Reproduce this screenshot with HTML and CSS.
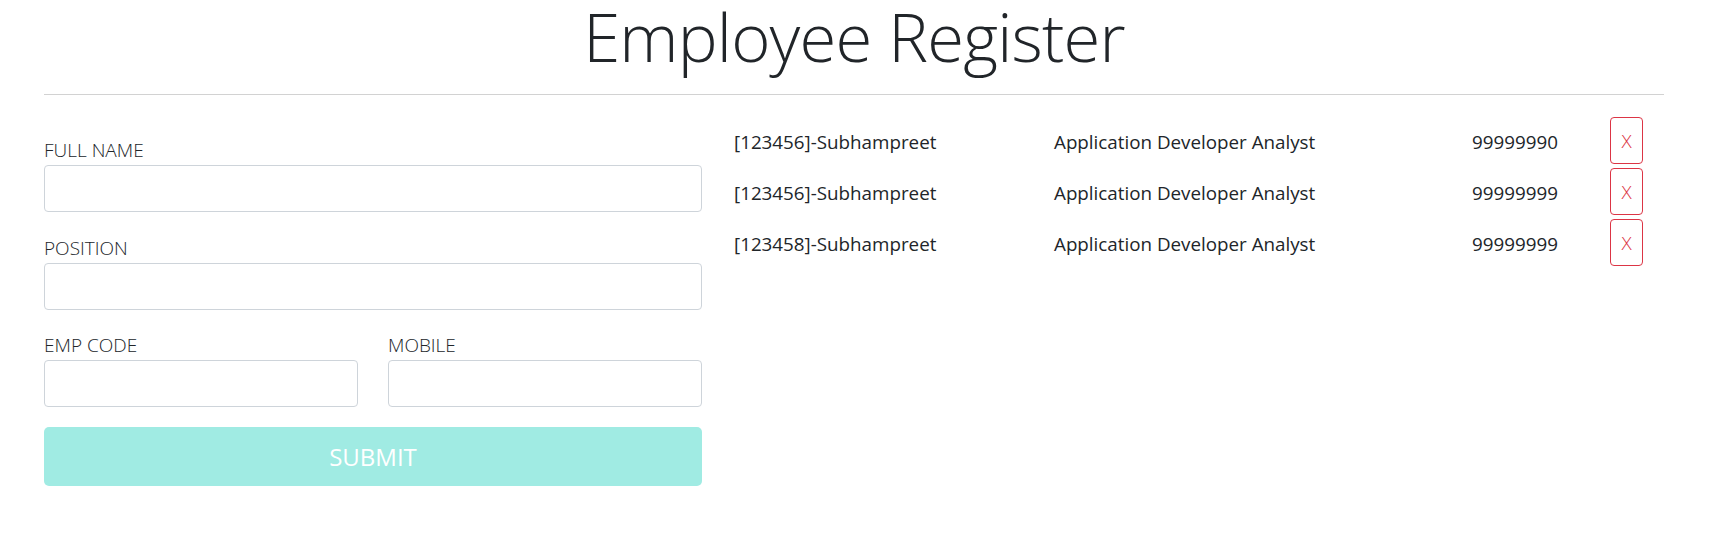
FILE: index.html
```html
<!DOCTYPE html>
<html lang="en">
<head>
<meta charset="utf-8">
<title>Employee Register</title>
<link rel="stylesheet" href="styles.css">
</head>
<body>
<div class="page">
  <h1 class="title">Employee Register</h1>
  <div class="rule"></div>
  <div class="main">
    <form class="form">
      <div class="group">
        <label class="label">FULL NAME</label>
        <input class="input" type="text">
      </div>
      <div class="group">
        <label class="label">POSITION</label>
        <input class="input" type="text">
      </div>
      <div class="group pair">
        <div class="half">
          <label class="label">EMP CODE</label>
          <input class="input" type="text">
        </div>
        <div class="half">
          <label class="label">MOBILE</label>
          <input class="input" type="text">
        </div>
      </div>
      <button class="submit" type="button">SUBMIT</button>
    </form>
    <div class="list">
      <div class="row">
        <span class="cell">[123456]-Subhampreet</span>
        <span class="cell">Application Developer Analyst</span>
        <span class="cell">99999990</span>
        <button class="del" type="button">X</button>
      </div>
      <div class="row">
        <span class="cell">[123456]-Subhampreet</span>
        <span class="cell">Application Developer Analyst</span>
        <span class="cell">99999999</span>
        <button class="del" type="button">X</button>
      </div>
      <div class="row">
        <span class="cell">[123458]-Subhampreet</span>
        <span class="cell">Application Developer Analyst</span>
        <span class="cell">99999999</span>
        <button class="del" type="button">X</button>
      </div>
    </div>
  </div>
</div>
</body>
</html>
```

FILE: styles.css
```css
* { box-sizing: border-box; }
html, body { margin: 0; padding: 0; background: #fff; }
body {
  font-family: "Open Sans", "Noto Sans", "DejaVu Sans", sans-serif;
  color: #212529;
}
.page {
  width: 1620px;
  margin-left: 44px;
}
.title {
  margin: 0;
  font-size: 67px;
  line-height: 72px;
  letter-spacing: -0.8px;
  font-weight: 300;
  text-align: center;
  color: #212529;
}
.rule {
  margin-top: 22px;
  border-top: 1px solid #d2d2d2;
}
.main {
  display: flex;
  align-items: flex-start;
}
.form {
  width: 658px;
  padding-top: 43px;
  display: flex;
  flex-direction: column;
}
.group {
  display: flex;
  flex-direction: column;
  margin-bottom: 23.5px;
}
.pair {
  flex-direction: row;
  gap: 30px;
  margin-bottom: 20px;
}
.half {
  flex: 1;
  display: flex;
  flex-direction: column;
}
.label {
  font-size: 19px;
  line-height: 24px;
  font-weight: 300;
  margin-bottom: 3px;
  color: #212529;
}
.input {
  height: 47px;
  border: 1px solid #ced4da;
  border-radius: 4px;
  background: #fff;
  font: inherit;
  padding: 6px 12px;
}
.submit {
  height: 59px;
  border: 0;
  border-radius: 5px;
  background: #a0ebe3;
  color: #fff;
  font-family: inherit;
  font-size: 24px;
  font-weight: 400;
}
.list {
  padding-top: 20px;
  padding-left: 32px;
  display: flex;
  flex-direction: column;
}
.row {
  display: grid;
  grid-template-columns: 320px 418px 138px 33px;
  align-items: center;
  height: 51px;
  font-size: 18.8px;
  line-height: 24px;
}
.cell { padding-top: 2px; }
.del {
  width: 33px;
  height: 47px;
  padding: 0;
  border: 1px solid #dc3545;
  border-radius: 4px;
  background: #fff;
  color: #dc3545;
  font-family: inherit;
  font-size: 19px;
  font-weight: 300;
}
```
